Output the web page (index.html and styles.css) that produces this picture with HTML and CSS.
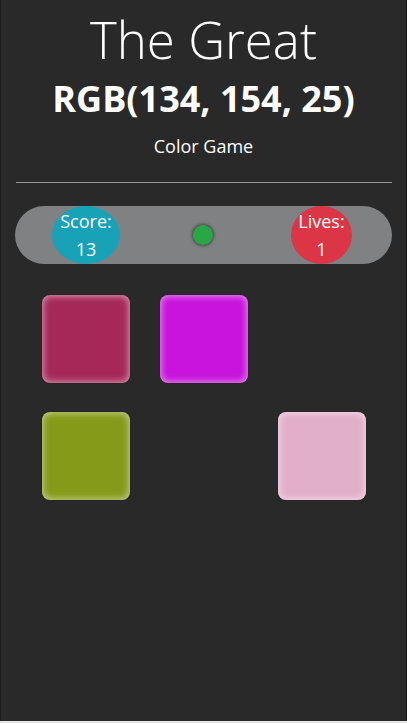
FILE: index.html
```html
<!DOCTYPE html>
<html>
<head>
<meta charset="utf-8">
<link rel="stylesheet" href="styles.css">
</head>
<body>
<div class="app">
  <header class="header">
    <h1 class="title">The Great</h1>
    <h2 class="rgb">RGB(134, 154, 25)</h2>
    <p class="subtitle">Color Game</p>
  </header>
  <hr class="divider">
  <div class="statusbar">
    <div class="badge badge-score"><span>Score:</span><span>13</span></div>
    <div class="dot"></div>
    <div class="badge badge-lives"><span>Lives:</span><span>1</span></div>
  </div>
  <div class="grid">
    <div class="tile" style="background:#a52858"></div>
    <div class="tile" style="background:#c814dc"></div>
    <div class="tile hidden"></div>
    <div class="tile" style="background:#869a19"></div>
    <div class="tile hidden"></div>
    <div class="tile" style="background:#e2afc9"></div>
  </div>
</div>
</body>
</html>
```
FILE: styles.css
```css
html, body {
  margin: 0;
  padding: 0;
}
body {
  background: #e6e6e6;
  font-family: "Open Sans", "Noto Sans", sans-serif;
  color: #fff;
}
.app {
  box-sizing: border-box;
  width: 407px;
  height: 721px;
  background: #292929;
  border-left: 1px solid #1c1c1c;
  border-right: 1px solid #1c1c1c;
  display: flex;
  flex-direction: column;
  align-items: center;
}
.header {
  display: flex;
  flex-direction: column;
  align-items: center;
}
.title {
  margin: 7px 0 0;
  font-weight: 300;
  font-size: 51px;
  line-height: 64px;
  letter-spacing: 0;
}
.rgb {
  margin: 7px 0 0;
  font-weight: 700;
  font-size: 36px;
  line-height: 42px;
}
.subtitle {
  margin: 15px 0 0;
  font-size: 18px;
  line-height: 22px;
}
.divider {
  align-self: stretch;
  margin: 25px 14px 0 15px;
  border: 0;
  height: 1px;
  background: #9a9a9a;
}
.statusbar {
  margin-top: 23px;
  width: 377px;
  height: 58px;
  border-radius: 29px;
  background: #7f8183;
  display: flex;
  align-items: center;
  position: relative;
}
.badge {
  height: 58px;
  border-radius: 50%;
  display: flex;
  flex-direction: column;
  align-items: center;
  justify-content: center;
  font-size: 18px;
  line-height: 28px;
}
.badge-score {
  width: 68px;
  margin-left: 37px;
  background: #17a2b8;
}
.badge-lives {
  width: 61px;
  margin-left: 78px;
  background: #dc3545;
}
.dot {
  width: 20px;
  height: 20px;
  border-radius: 50%;
  background: #28a745;
  box-shadow: 0 0 3px 1px rgba(0,0,0,0.45);
  margin-left: 73px;
}
.grid {
  margin-top: 31px;
  display: grid;
  grid-template-columns: repeat(3, 88px);
  grid-auto-rows: 88px;
  column-gap: 30px;
  row-gap: 29px;
}
.tile {
  border-radius: 8px;
  box-shadow: inset 0 0 7px 1px rgba(255,255,255,0.55), 0 0 1px rgba(0,0,0,0.6);
}
.tile.hidden {
  visibility: hidden;
}
```
